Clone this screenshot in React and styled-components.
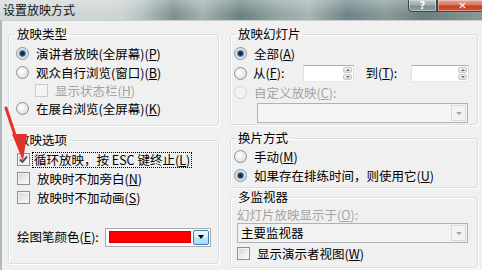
import React from 'react'
import styled, { createGlobalStyle } from 'styled-components'

const GlobalStyle = createGlobalStyle`
  html, body {
    margin: 0;
    padding: 0;
  }
  body {
    width: 482px;
    height: 270px;
    overflow: hidden;
    font-family: "Noto Sans CJK SC", "Liberation Sans", sans-serif;
    font-size: 12.5px;
    color: #000;
  }
`

const Window = styled.div`
  position: relative;
  width: 482px;
  height: 270px;
  overflow: hidden;
  display: flex;
  flex-direction: column;
  background: #aeb9b9;
`

const TitleBar = styled.div`
  flex: none;
  height: 20px;
  display: flex;
  justify-content: space-between;
  align-items: flex-start;
  background:
    linear-gradient(180deg, rgba(255, 255, 255, 0.28), rgba(255, 255, 255, 0) 70%),
    linear-gradient(90deg, #d4dada 0%, #cdd4d4 25%, #b2bfbe 30%, #7c9190 36%, #a3b2b0 42%,
      #6c8281 50%, #91a3a1 57%, #a8b6b4 64%, #6f8488 72%, #899b9b 80%, #6a7e7f 88%, #889999 100%);
`

const Title = styled.div`
  padding: 3px 0 0 3px;
  font-size: 12px;
  line-height: 13px;
  color: #111;
`

const CaptionButtons = styled.div`
  display: flex;
  margin-right: -6px;
`

const CaptionButton = styled.div`
  width: ${p => p.$w}px;
  height: 12px;
  box-sizing: border-box;
  border: 1px solid #3e4a4c;
  border-top: none;
  border-radius: ${p => p.$r};
  display: flex;
  align-items: center;
  justify-content: center;
  color: #fff;
  font: bold 10px "DejaVu Sans", sans-serif;
  line-height: 10px;
  box-shadow: inset 0 0 0 1px rgba(255, 255, 255, 0.35);
  background: ${p => p.$close
    ? 'linear-gradient(180deg, #e6a596 0%, #d7765f 45%, #c2401f 55%, #d1583a 100%)'
    : 'linear-gradient(180deg, #b9c5c7 0%, #9eadb0 45%, #7e8f93 55%, #8fa0a3 100%)'};
`

const Client = styled.div`
  flex: 1;
  margin-left: 2px;
  border-top: 1px solid #c9d0d0;
  background: #f0f0f0;
  display: grid;
  grid-template-columns: 211px 248px;
  column-gap: 11px;
  align-items: start;
  padding: 6px 0 0 6px;
`

const Column = styled.div`
  display: flex;
  flex-direction: column;
`

const Group = styled.fieldset`
  margin: ${p => p.$mt || 0}px 0 0;
  padding: 0;
  height: ${p => p.$h}px;
  box-sizing: border-box;
  min-width: 0;
  border: 1px solid #d5dfe5;
  border-radius: 3px;
  box-shadow: inset 1px 1px 0 #fff, 1px 1px 0 #fff;
`

const Legend = styled.legend`
  margin-left: ${p => p.$ml ?? 6}px;
  padding: 0 2px;
  line-height: 14px;
`

const GroupBody = styled.div`
  display: flex;
  flex-direction: column;
  padding: ${p => p.$pt ?? 3}px 0 0 ${p => p.$pl}px;
`

const Row = styled.div`
  display: flex;
  align-items: center;
  height: ${p => p.$h || 19}px;
  padding-left: ${p => p.$indent || 0}px;
  flex: none;
  color: ${p => (p.$disabled ? '#a3a3a3' : '#000')};
  white-space: nowrap;
  line-height: 14px;
`

const Caption = styled.span`
  margin-left: ${p => p.$gap ?? 5}px;
  padding: 0 1px;
  border: 1px ${p => (p.$focus ? 'dotted #000' : 'solid transparent')};
`

const RadioDot = styled.span`
  flex: none;
  width: 13px;
  height: 13px;
  box-sizing: border-box;
  border-radius: 50%;
  border: 1px solid ${p => (p.$disabled ? '#cfd1d1' : '#8d9090')};
  background: ${p =>
    p.$checked
      ? 'radial-gradient(circle at 50% 50%, #0f2c4c 0 1.5px, #2f5d8a 2.5px, #8fb0cf 3.4px, #dcdcdc 4px, #f7f7f7 100%)'
      : p.$disabled
        ? '#f4f4f4'
        : 'radial-gradient(circle at 40% 40%, #ffffff 0, #e9e9e9 55%, #cfcfcf 100%)'};
`

const CheckBox = styled.span`
  flex: none;
  width: 13px;
  height: 13px;
  box-sizing: border-box;
  border: 1px solid ${p => (p.$disabled ? '#cbcdcd' : '#8e8f8f')};
  box-shadow: inset 0 0 0 1px #f4f4f4;
  background: ${p =>
    p.$disabled ? '#f4f4f4' : 'linear-gradient(135deg, #cdd1d6 0%, #eeeeee 60%, #fbfbfb 100%)'};
  display: flex;
  align-items: center;
  justify-content: center;
`

const SpinBox = styled.div`
  width: ${p => p.$w}px;
  height: 17px;
  box-sizing: border-box;
  margin-left: ${p => p.$ml}px;
  border: 1px solid;
  border-color: #abadb3 #dbdfe6 #e3e9ef #e2e3ea;
  background: #fff;
  display: flex;
  justify-content: flex-end;
  padding: 1px;
`

const SpinButtons = styled.div`
  width: 9px;
  display: flex;
  flex-direction: column;
  gap: 1px;
`

const SpinButton = styled.div`
  flex: 1;
  border: 1px solid #c3c6cc;
  border-radius: 2px;
  background: linear-gradient(180deg, #f6f6f6, #dedede);
  display: flex;
  align-items: center;
  justify-content: center;
  &::after {
    content: '';
    border-left: 2px solid transparent;
    border-right: 2px solid transparent;
    ${p => (p.$up ? 'border-bottom' : 'border-top')}: 2px solid #6b6b6b;
  }
`

const Text = styled.span`
  margin-left: ${p => p.$ml || 0}px;
`

const Combo = styled.div`
  width: ${p => p.$w}px;
  height: 20px;
  flex: none;
  box-sizing: border-box;
  margin: ${p => p.$m};
  border: 1px solid #adb2b5;
  background: ${p => (p.$enabled ? '#f2f2f2' : '#f4f4f4')};
  display: flex;
  align-items: center;
  justify-content: space-between;
  padding: 0 1px 0 3px;
  line-height: 14px;
`

const ComboArrow = styled.div`
  width: 15px;
  height: 16px;
  box-sizing: border-box;
  border: 1px solid #dadada;
  background: #f3f3f3;
  display: flex;
  align-items: center;
  justify-content: center;
  &::after {
    content: '';
    border-left: 3px solid transparent;
    border-right: 3px solid transparent;
    border-top: 3px solid #a8a8a8;
  }
`

const ColorPicker = styled.div`
  width: 106px;
  height: 19px;
  box-sizing: border-box;
  margin-left: ${p => p.$ml}px;
  border: 1px solid #a9a9a9;
  background: #fff;
  display: flex;
  align-items: center;
  gap: 2px;
  padding: 0 1px 0 3px;
`

const Swatch = styled.div`
  flex: 1;
  height: 12px;
  box-sizing: border-box;
  border: 1px solid #d40000;
  background: #ff0000;
`

const DropButton = styled.div`
  width: 16px;
  height: 15px;
  box-sizing: border-box;
  border: 1px solid #3c7fb1;
  border-radius: 2px;
  background: linear-gradient(180deg, #eaf6fd 0%, #d9f0fc 45%, #bee6fd 50%, #a7d9f5 100%);
  display: flex;
  align-items: center;
  justify-content: center;
  &::after {
    content: '';
    border-left: 3px solid transparent;
    border-right: 3px solid transparent;
    border-top: 4px solid #000;
  }
`

const Arrow = styled.svg`
  position: absolute;
  left: 0;
  top: 100px;
  pointer-events: none;
`

const Key = ({ k }) => (
  <>
    (<u>{k}</u>)
  </>
)

const Check = () => (
  <svg width="9" height="9" viewBox="0 0 9 9">
    <path d="M1 4.5 L3.5 7 L8 1.5" fill="none" stroke="#3b4a63" strokeWidth="1.8" />
  </svg>
)

function Radio({ checked, disabled, children, indent, h }) {
  return (
    <Row $disabled={disabled} $indent={indent} $h={h}>
      <RadioDot $checked={checked} $disabled={disabled} />
      <Caption>{children}</Caption>
    </Row>
  )
}

function Checkbox({ checked, disabled, focus, children, indent, h }) {
  return (
    <Row $disabled={disabled} $indent={indent} $h={h}>
      <CheckBox $disabled={disabled}>{checked && <Check />}</CheckBox>
      <Caption $focus={focus} $gap={focus ? 2 : 5}>{children}</Caption>
    </Row>
  )
}

export default function App() {
  return (
    <Window>
      <GlobalStyle />
      <TitleBar>
        <Title>设置放映方式</Title>
        <CaptionButtons>
          <CaptionButton $w={29} $r="0 0 0 4px">?</CaptionButton>
          <CaptionButton $w={51} $r="0 0 4px 0" $close>✕</CaptionButton>
        </CaptionButtons>
      </TitleBar>
      <Client>
        <Column>
          <Group $h={99}>
            <Legend>放映类型</Legend>
            <GroupBody $pl={7}>
              <Radio checked>演讲者放映(全屏幕)<Key k="P" /></Radio>
              <Radio>观众自行浏览(窗口)<Key k="B" /></Radio>
              <Checkbox disabled indent={19} h={17}>显示状态栏<Key k="H" /></Checkbox>
              <Radio>在展台浏览(全屏幕)<Key k="K" /></Radio>
            </GroupBody>
          </Group>
          <Group $h={131} $mt={7}>
            <Legend>放映选项</Legend>
            <GroupBody $pl={8}>
              <Checkbox checked focus>循环放映，按 ESC 键终止<Key k="L" /></Checkbox>
              <Checkbox>放映时不加旁白<Key k="N" /></Checkbox>
              <Checkbox>放映时不加动画<Key k="S" /></Checkbox>
              <Row $h={20} style={{ marginTop: 20 }}>
                <Text>绘图笔颜色<Key k="E" />:</Text>
                <ColorPicker $ml={6}>
                  <Swatch />
                  <DropButton />
                </ColorPicker>
              </Row>
            </GroupBody>
          </Group>
        </Column>
        <Column>
          <Group $h={98}>
            <Legend $ml={5}>放映幻灯片</Legend>
            <GroupBody $pl={3}>
              <Radio checked>全部<Key k="A" /></Radio>
              <Row $h={20}>
                <RadioDot />
                <Text $ml={6}>从<Key k="F" />:</Text>
                <SpinBox $w={51} $ml={19}>
                  <SpinButtons>
                    <SpinButton $up />
                    <SpinButton />
                  </SpinButtons>
                </SpinBox>
                <Text $ml={11}>到<Key k="T" />:</Text>
                <SpinBox $w={58} $ml={14}>
                  <SpinButtons>
                    <SpinButton $up />
                    <SpinButton />
                  </SpinButtons>
                </SpinBox>
              </Row>
              <Radio disabled h={19}>自定义放映<Key k="C" />:</Radio>
              <Combo $w={211} $m="1px 0 0 23px">
                <span />
                <ComboArrow />
              </Combo>
            </GroupBody>
          </Group>
          <Group $h={57} $mt={6}>
            <Legend $ml={5}>换片方式</Legend>
            <GroupBody $pl={3} $pt={2}>
              <Radio>手动<Key k="M" /></Radio>
              <Radio checked>如果存在排练时间，则使用它<Key k="U" /></Radio>
            </GroupBody>
          </Group>
          <Group $h={78} $mt={2}>
            <Legend $ml={5}>多监视器</Legend>
            <GroupBody $pl={6} $pt={2}>
              <Row $disabled $h={17}>幻灯片放映显示于<Key k="O" />:</Row>
              <Combo $w={231} $m="0" $enabled>
                <span>主要监视器</span>
                <ComboArrow />
              </Combo>
              <Checkbox h={21} indent={-3}>显示演示者视图<Key k="W" /></Checkbox>
            </GroupBody>
          </Group>
        </Column>
      </Client>
      <Arrow width="32" height="66" viewBox="0 0 32 66">
        <path d="M6 8 L16 38" stroke="#e3322b" strokeWidth="3" strokeLinecap="round" />
        <polygon points="12,34 27,34 23,61" fill="#e3322b" />
      </Arrow>
    </Window>
  )
}
